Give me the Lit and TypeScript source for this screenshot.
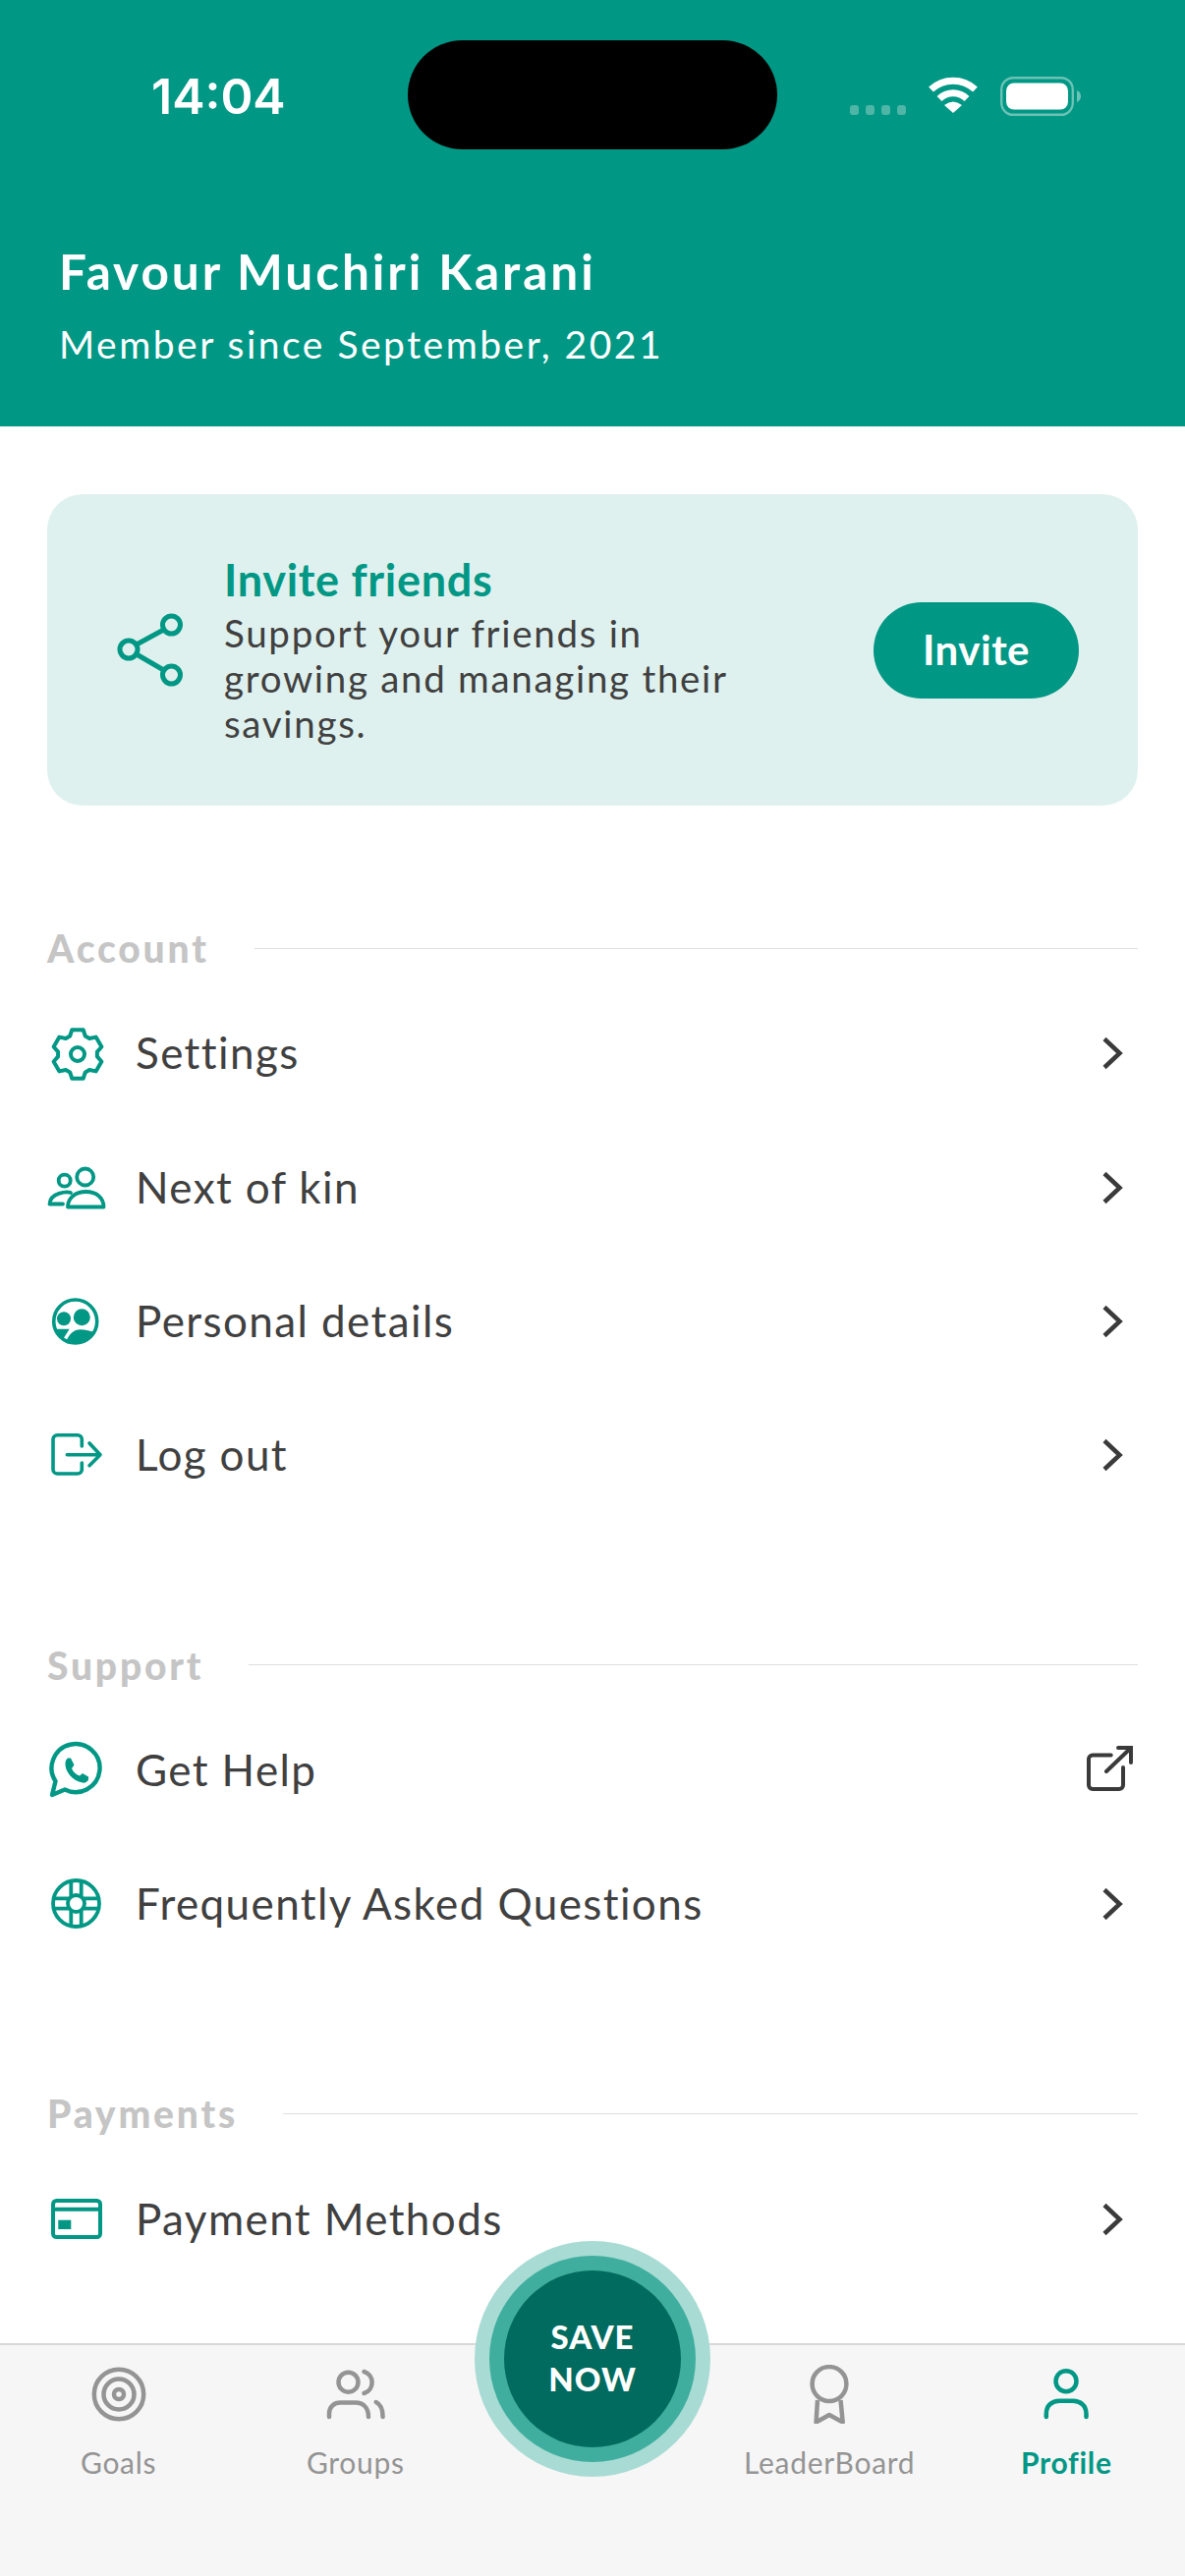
import { LitElement, html, css, svg } from "lit";
import { customElement } from "lit/decorators.js";

const gearPath = () => {
  const c = 31;
  const pts: string[] = [];
  for (let k = 0; k < 6; k++) {
    const a = -90 + k * 60;
    const p = (r: number, d: number) => {
      const t = ((a + d) * Math.PI) / 180;
      return `${(c + r * Math.cos(t)).toFixed(1)} ${(c + r * Math.sin(t)).toFixed(1)}`;
    };
    pts.push(`${k === 0 ? "M" : "L"}${p(20, -23)}`, `L${p(25.5, -13)}`, `L${p(25.5, 13)}`, `L${p(20, 23)}`);
  }
  return pts.join(" ") + " Z";
};

const chevron = svg`<path d="M26 15.5 41.5 30 26 44.5" fill="none" stroke="#3a3a3a" stroke-width="4.5"/>`;
const external = svg`<g fill="none" stroke="#3a3a3a" stroke-width="4" stroke-linecap="round"><path d="M32.7 14.5H14a4 4 0 0 0-4 4V45a4 4 0 0 0 4 4h27a4 4 0 0 0 4-4V27"/><path d="M28 31 53 7M40 7h13v15"/></g>`;

const icons = {
  gear: svg`<g fill="none" stroke="currentColor" stroke-width="4" stroke-linejoin="round"><path d=${gearPath()}/><circle cx="31" cy="31" r="7"/></g>`,
  kin: svg`<g fill="none" stroke="currentColor" stroke-width="3.8" stroke-linecap="round" stroke-linejoin="round"><circle cx="38.7" cy="19" r="8.5"/><circle cx="17.7" cy="22.7" r="6"/><path d="M21 49.5H57.5C57.5 40 50 34 39.5 34S21 40 21 49.5Z"/><path d="M24 35C20 33.6 3 35 2.5 46.5H16"/></g>`,
  person: svg`<circle cx="28.7" cy="30" r="22" fill="none" stroke="currentColor" stroke-width="3.6"/><g fill="currentColor"><circle cx="17" cy="27.3" r="7"/><circle cx="35.3" cy="25.7" r="8.5"/><path d="M8 37.7H22.7L16 48.3C11.5 45.5 8.5 41.5 8 37.7Z"/><path d="M18.7 51.7C22 43 27 38.3 33.7 38.3 39 38.3 44 39.5 49 41.7 45 49 37 53 28.7 53 25 53 21.5 52.7 18.7 51.7Z"/></g>`,
  logout: svg`<g fill="none" stroke="currentColor" stroke-width="3.6" stroke-linecap="round" stroke-linejoin="round"><path d="M35.3 21V14A4.3 4.3 0 0 0 31 9.7H10.3A4.3 4.3 0 0 0 6 14V44.7A4.3 4.3 0 0 0 10.3 49H31A4.3 4.3 0 0 0 35.3 44.7V38"/><path d="M20.3 29.7H53M43 18 54 29.7 43 40.7"/></g>`,
  whatsapp: svg`<path d="M5 55 8.5 41A24.5 24.5 0 1 1 18 49.5Z" fill="none" stroke="currentColor" stroke-width="4.4" stroke-linejoin="round"/><path fill="currentColor" d="M21 17.5h3l3.5 7-2.5 3.5c1.5 3.5 4 6 8 7.5l3-2.5 6 3.5v3c-1 2.5-4 3.5-6 3C26 41 18 31 18.5 23c0-2.5 1-4.5 2.5-5.5Z"/>`,
  faq: svg`<g fill="none" stroke="currentColor" stroke-width="3.8"><circle cx="29.5" cy="29.5" r="23.5"/><circle cx="29.5" cy="29.5" r="8.5"/><path d="M24.3 7V22M34.7 7V22M24.3 37V52M34.7 37V52M7 24.3H22M7 34.7H22M37 24.3H52M37 34.7H52"/></g>`,
  card: svg`<g fill="none" stroke="currentColor" stroke-width="4"><rect x="6" y="11" width="48" height="37" rx="3.5"/><path d="M6 19.8H54"/></g><rect x="11.3" y="30.7" width="13" height="9.3" fill="currentColor"/>`,
};

const goals = svg`<g fill="none" stroke="currentColor" stroke-width="4.5"><circle cx="30" cy="30" r="25.2"/><circle cx="30" cy="30" r="15.5"/><circle cx="30" cy="30" r="5"/></g>`;
const groups = svg`<g fill="none" stroke="currentColor" stroke-width="4.5" stroke-linecap="round"><circle cx="22.5" cy="17.7" r="10"/><path d="M38.5 7A11.5 11.5 0 0 1 38.5 29"/><path d="M3 53V50C3 42 9 38.5 14 38.5H30C37 38.5 43 43 43 53"/><path d="M50.7 38C55 40 57.6 45 57.6 53"/></g>`;
const leader = svg`<g fill="none" stroke="currentColor" stroke-width="4.5" stroke-linejoin="round"><circle cx="30" cy="19.5" r="17.4"/><path d="M18 36 16.6 58.5 30 51 43.7 58.5 41.5 36"/></g>`;
const profile = svg`<g fill="none" stroke="currentColor" stroke-width="4.5" stroke-linecap="round"><circle cx="30" cy="16.7" r="10.5"/><path d="M9.8 53V50C9.8 41 16 36.8 23 36.8H37C44 36.8 50.5 41 50.5 50V53"/></g>`;

@customElement("app-root")
export class AppRoot extends LitElement {
  static styles = css`
    :host {
      display: flex;
      flex-direction: column;
      width: 1206px;
      height: 2622px;
      overflow: hidden;
      background: #fff;
      font-family: "Lato", "Liberation Sans", sans-serif;
      color: #404040;
    }
    .header {
      background: #009785;
      color: #fff;
      height: 434px;
      flex: none;
      box-sizing: border-box;
    }
    .status {
      display: flex;
      padding-top: 41px;
      height: 111px;
    }
    .time-slot {
      width: 415px;
      box-sizing: border-box;
      padding: 3px 0 0 154px;
      display: flex;
      align-items: center;
      font-family: "Inter", sans-serif;
      font-weight: 600;
      font-size: 50px;
      letter-spacing: 0;
    }
    .island {
      width: 376px;
      height: 111px;
      border-radius: 56px;
      background: #000;
    }
    .status-right {
      display: flex;
      align-items: flex-start;
      padding: 37px 0 0 74px;
    }
    .dots {
      display: flex;
      gap: 7.3px;
      margin: 29px 22px 0 0;
    }
    .dots i {
      display: block;
      width: 8.7px;
      height: 10px;
      border-radius: 3px;
      background: #4fb5a6;
    }
    .wifi {
      width: 52px;
      height: 37px;
      margin-right: 22px;
    }
    .battery {
      width: 82px;
      height: 40px;
    }
    .who {
      padding: 95px 0 0 60px;
    }
    .name {
      font-size: 49.5px;
      font-weight: 700;
      line-height: 58px;
      letter-spacing: 2.95px;
    }
    .since {
      font-size: 39px;
      line-height: 48px;
      margin-top: 21px;
      font-weight: 400;
      letter-spacing: 2.5px;
    }
    .content {
      flex: 1;
      min-height: 0;
      padding: 69px 48px 0;
      overflow: hidden;
    }
    .invite {
      height: 317px;
      box-sizing: border-box;
      background: #dff1ee;
      border-radius: 36px;
      display: flex;
      align-items: center;
      padding: 0 60px 0 68px;
    }
    .invite-icon {
      width: 74px;
      height: 80px;
      flex: none;
      color: #009785;
    }
    .invite-text {
      margin-left: 38px;
      flex: 1;
    }
    .invite-title {
      color: #009785;
      font-size: 45px;
      font-weight: 700;
      line-height: 50px;
      letter-spacing: 0.7px;
    }
    .invite-body {
      font-size: 38.5px;
      line-height: 46px;
      margin-top: 6px;
      letter-spacing: 1.7px;
    }
    .invite-btn {
      width: 209px;
      height: 98px;
      box-sizing: border-box;
      padding-bottom: 2px;
      border-radius: 49px;
      background: #009785;
      color: #fff;
      font-size: 42px;
      font-weight: 700;
      letter-spacing: 0.5px;
      display: flex;
      align-items: center;
      justify-content: center;
    }
    .section {
      margin-top: 120px;
    }
    .section-head {
      display: flex;
      align-items: center;
      gap: 46px;
      height: 50px;
      font-size: 39px;
      font-weight: 900;
      letter-spacing: 2.8px;
      color: #c5c5c5;
    }
    .section-head i {
      flex: 1;
      height: 1px;
      background: #dedede;
    }
    .rows {
      margin-top: 14px;
    }
    .row {
      display: flex;
      align-items: center;
      height: 136.4px;
      font-size: 44px;
      letter-spacing: 1.4px;
    }
    .row-icon {
      width: 60px;
      height: 60px;
      flex: none;
      color: #009785;
    }
    .row-label {
      flex: 1;
      margin-left: 30px;
      padding-bottom: 2px;
    }
    .row-end {
      width: 60px;
      height: 60px;
      flex: none;
    }
    .tabs {
      position: relative;
      flex: none;
      height: 237px;
      box-sizing: border-box;
      background: #f6f6f6;
      border-top: 2px solid #d8d8d8;
      display: grid;
      grid-template-columns: repeat(5, 1fr);
      padding-top: 20px;
    }
    .tab {
      display: flex;
      flex-direction: column;
      align-items: center;
      color: #949494;
      font-size: 30px;
      letter-spacing: 0.7px;
    }
    .tab svg {
      width: 60px;
      height: 60px;
      display: block;
    }
    .tab span {
      margin-top: 20.5px;
      line-height: 36px;
    }
    .tab.active {
      color: #009785;
      font-weight: 700;
    }
    .save {
      position: absolute;
      left: 513px;
      top: -76px;
      width: 180px;
      height: 180px;
      box-sizing: border-box;
      padding-bottom: 3px;
      border-radius: 50%;
      background: #006b5e;
      box-shadow: 0 0 0 15px #3fae9f, 0 0 0 30px #a8dbd3;
      color: #fff;
      font-size: 33px;
      font-weight: 900;
      line-height: 43px;
      letter-spacing: 1px;
      text-align: center;
      display: flex;
      align-items: center;
      justify-content: center;
    }
  `;

  private row(icon: unknown, label: string, end: unknown = chevron) {
    return html`<div class="row">
      <svg class="row-icon" viewBox="0 0 60 60">${icon}</svg>
      <div class="row-label">${label}</div>
      <svg class="row-end" viewBox="0 0 60 60">${end}</svg>
    </div>`;
  }

  private section(title: string, rows: unknown) {
    return html`<div class="section">
      <div class="section-head">${title}<i></i></div>
      <div class="rows">${rows}</div>
    </div>`;
  }

  render() {
    return html`
      <div class="header">
        <div class="status">
          <div class="time-slot">14:04</div>
          <div class="island"></div>
          <div class="status-right">
            <div class="dots"><i></i><i></i><i></i><i></i></div>
            <svg class="wifi" viewBox="0 0 52 37">
              <g fill="none" stroke="#fff" stroke-width="7">
                <path d="M3.5 13A33 33 0 0 1 48.5 13" />
                <path d="M12 22.5A20 20 0 0 1 40 22.5" />
              </g>
              <path d="M17 29Q26 22 35 29L26 37Z" fill="#fff" />
            </svg>
            <svg class="battery" viewBox="0 0 82 40">
              <rect x="1.2" y="1.2" width="72.6" height="37.6" rx="12" fill="none" stroke="#6cc2b5" stroke-width="2.4" />
              <rect x="6" y="6.5" width="63" height="27" rx="8" fill="#fff" />
              <path d="M78 14C80.5 15 82 17 82 20S80.5 25 78 26Z" fill="#6cc2b5" />
            </svg>
          </div>
        </div>
        <div class="who">
          <div class="name">Favour Muchiri Karani</div>
          <div class="since">Member since September, 2021</div>
        </div>
      </div>

      <div class="content">
        <div class="invite">
          <svg class="invite-icon" viewBox="0 0 74 80">
            <g fill="none" stroke="currentColor" stroke-width="5">
              <circle cx="15" cy="39" r="9" />
              <circle cx="58.5" cy="14" r="9" />
              <circle cx="58.5" cy="65" r="9" />
              <path d="M23 34 50.5 19M23 44 50.5 60" />
            </g>
          </svg>
          <div class="invite-text">
            <div class="invite-title">Invite friends</div>
            <div class="invite-body">Support your friends in<br />growing and managing their<br />savings.</div>
          </div>
          <div class="invite-btn">Invite</div>
        </div>

        ${this.section(
          "Account",
          html`${this.row(icons.gear, "Settings")}${this.row(icons.kin, "Next of kin")}${this.row(
            icons.person,
            "Personal details"
          )}${this.row(icons.logout, "Log out")}`
        )}
        ${this.section(
          "Support",
          html`${this.row(icons.whatsapp, "Get Help", external)}${this.row(icons.faq, "Frequently Asked Questions")}`
        )}
        ${this.section("Payments", this.row(icons.card, "Payment Methods"))}
      </div>

      <div class="tabs">
        <div class="tab"><svg viewBox="0 0 60 60">${goals}</svg><span>Goals</span></div>
        <div class="tab"><svg viewBox="0 0 60 60">${groups}</svg><span>Groups</span></div>
        <div></div>
        <div class="tab"><svg viewBox="0 0 60 60">${leader}</svg><span>LeaderBoard</span></div>
        <div class="tab active"><svg viewBox="0 0 60 60">${profile}</svg><span>Profile</span></div>
        <div class="save">SAVE<br />NOW</div>
      </div>
    `;
  }
}
